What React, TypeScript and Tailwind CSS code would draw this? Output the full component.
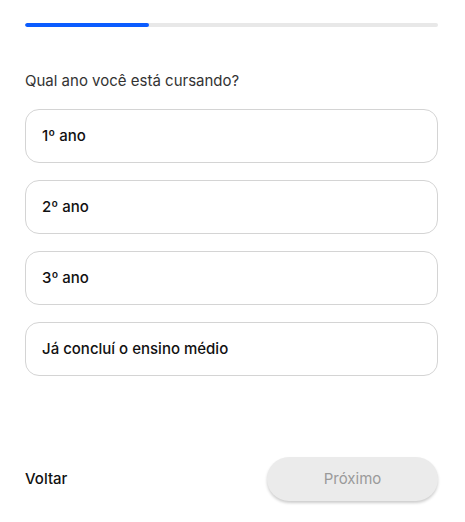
const options = ["1º ano", "2º ano", "3º ano", "Já concluí o ensino médio"];

export default function App() {
  return (
    <div className="w-[465px] h-[522px] bg-white pl-[25px] pr-[27px] pt-[23px] flex flex-col font-['Inter',sans-serif]">
      <div className="h-[4px] w-full rounded-full bg-[#e8e8e8] overflow-hidden">
        <div className="h-full w-[30%] rounded-full bg-[#0b5cff]" />
      </div>

      <p className="mt-[44px] text-[15px] leading-[20px] text-[#333333]">Qual ano você está cursando?</p>

      <div className="mt-[18px] flex flex-col gap-[17px]">
        {options.map((o) => (
          <button
            key={o}
            className="h-[54px] w-full rounded-[14px] border border-[#d4d4d4] bg-white px-[16px] text-left text-[15px] font-medium text-[#111111]"
          >
            {o}
          </button>
        ))}
      </div>

      <div className="mt-auto mb-[21px] flex items-center justify-between">
        <button className="text-[15px] font-medium text-[#111111]">Voltar</button>
        <button className="h-[44px] w-[171px] rounded-full bg-[#ebebeb] text-[15px] text-[#9a9a9a] shadow-[0_2px_3px_rgba(0,0,0,0.2)]">
          Próximo
        </button>
      </div>
    </div>
  );
}
